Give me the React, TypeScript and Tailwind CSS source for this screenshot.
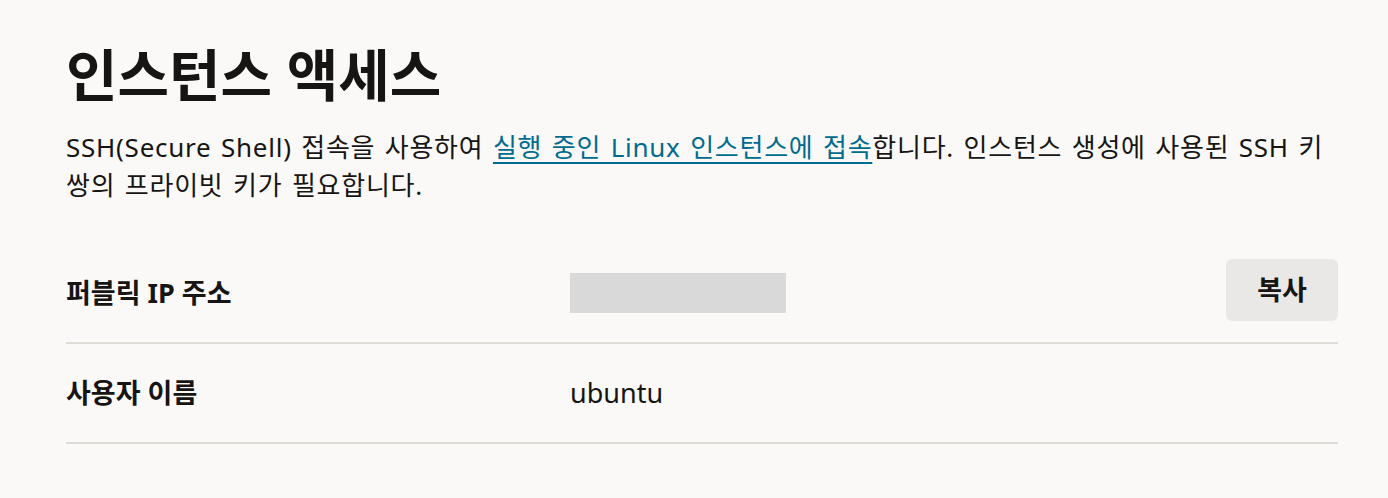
import React from 'react';

const rows = [
  { label: '퍼블릭 IP 주소', value: null, copy: true },
  { label: '사용자 이름', value: 'ubuntu', copy: false },
];

const App: React.FC = () => {
  return (
    <div className="min-h-[498px] w-full bg-[#faf9f8] text-[#161513] pl-[66px] pr-[50px] pt-[34px] font-['Noto_Sans','Noto_Sans_CJK_KR',sans-serif]">
      <h1 className="text-[56px] font-bold leading-[80px]">인스턴스 액세스</h1>
      <p className="mt-[14px] text-[26px] leading-[38px] tracking-[0.75px] [word-spacing:2px] break-keep">
        SSH(Secure Shell) 접속을 사용하여{' '}
        <a href="#" className="text-[#006b8f] underline underline-offset-[5px]">
          실행 중인 Linux 인스턴스에 접속
        </a>
        합니다. 인스턴스 생성에 사용된 SSH 키 쌍의 프라이빗 키가 필요합니다.
      </p>

      <div className="mt-[40px]">
        {rows.map((row) => (
          <div key={row.label} className="flex items-center h-[100px] border-b-2 border-[#dfdcd8]">
            <div className="w-[504px] text-[27px] font-bold">{row.label}</div>
            <div className="flex-1 text-[27px]">
              {row.value ? row.value : <div className="w-[216px] h-[40px] bg-[#d9d9d9]" />}
            </div>
            {row.copy && (
              <button className="w-[112px] h-[62px] mb-[6px] rounded-[6px] bg-[#e9e8e6] text-[27px] font-bold">
                복사
              </button>
            )}
          </div>
        ))}
      </div>
    </div>
  );
};

export default App;
